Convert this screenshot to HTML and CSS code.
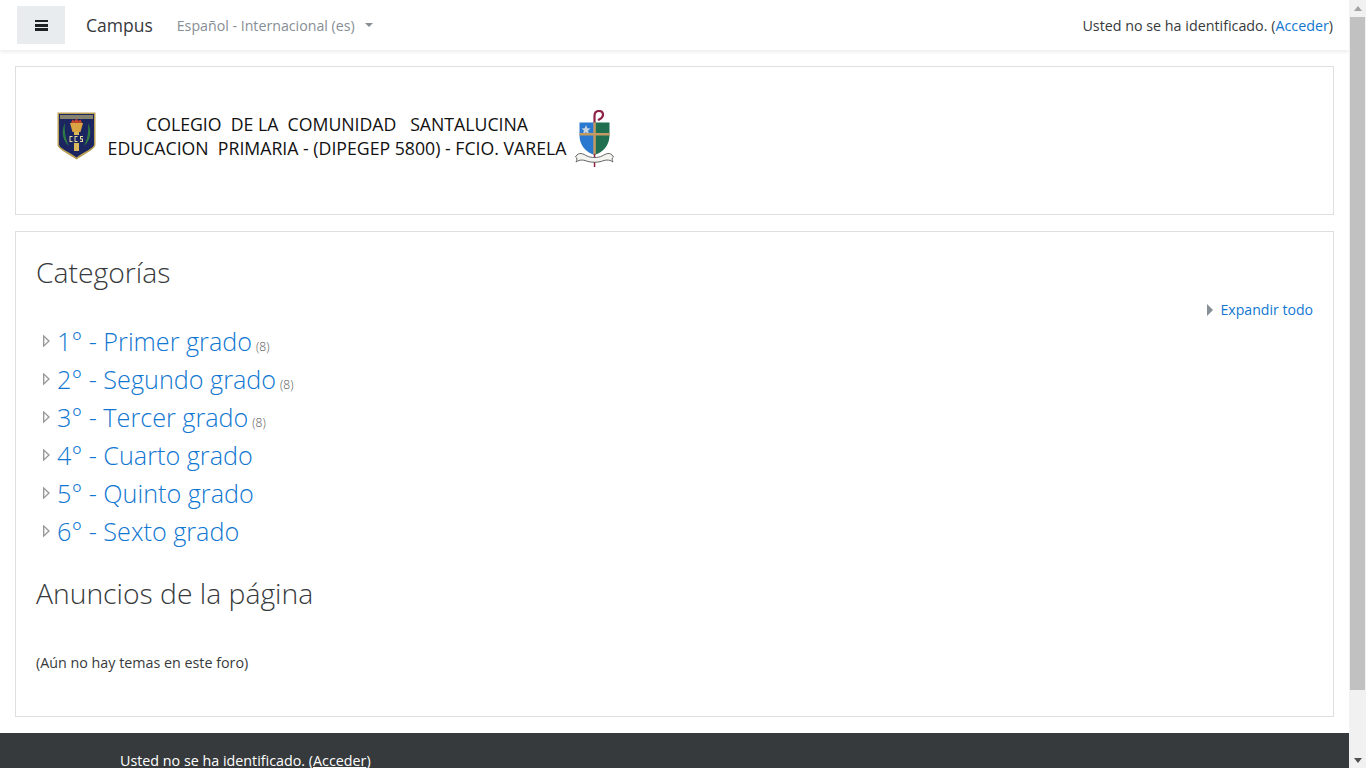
FILE: index.html
```html
<!DOCTYPE html>
<html lang="es">
<head>
    <meta charset="UTF-8">
    <meta name="viewport" content="width=device-width, initial-scale=1.0">
    <title>Campus</title>
    <link rel="stylesheet" href="styles.css">
</head>
<body>
    <div class="window">
        <div class="page">
            <nav class="navbar">
                <button class="menu-btn" aria-label="Menu">
                    <span class="bars"></span>
                </button>
                <a class="brand" href="#">Campus</a>
                <a class="lang" href="#">Español - Internacional ‎(es)‎<span class="caret"></span></a>
                <div class="login-info">Usted no se ha identificado. (<a href="#">Acceder</a>)</div>
            </nav>

            <header class="card header-card">
                <div class="logo">
                    <svg class="crest-left" width="39" height="48" viewBox="0 0 39 48">
                        <path d="M0.5 0.5H38.5V33C38.5 37 26 43 19.5 47.5C13 43 0.5 37 0.5 33Z" fill="#b9a054"/>
                        <path d="M2 2H37V32.500C37 36 25 41 19.5 45.500C14 41 2 36 2 32.500Z" fill="#1b2560"/>
                        <rect x="3" y="3" width="33" height="4" fill="#85836f"/>
                        <path d="M13 11H26L23.500 20H15.500Z" fill="#d9a441"/>
                        <path d="M14 11L15.500 7.500L17.500 9L19.500 6.500L21.500 9L23.500 7.500L25 11Z" fill="#c4452d"/>
                        <rect x="17" y="20" width="5" height="19" fill="#d9b75a"/>
                        <path d="M8 11C3.500 20 6 29 12 34C9 28 7 20 8 11Z" fill="#2f7a44"/>
                        <path d="M31 11C35.500 20 33 29 27 34C30 28 32 20 31 11Z" fill="#2f7a44"/>
                        <rect x="11" y="23" width="17" height="8" fill="#1b2560"/>
                        <path d="M12.500 24H15.500V25H13.500V29H15.500V30H12.500ZM17.500 24H20.500V25H18.500V29H20.500V30H17.500ZM23 24H26V25H24V26.500H26V30H23V29H25V27.500H23Z" fill="#e6d9a0"/>
                    </svg>
                    <div class="logo-text">
                        <div class="logo-line">COLEGIO  DE LA  COMUNIDAD   SANTALUCINA</div>
                        <div class="logo-line">EDUCACION  PRIMARIA - (DIPEGEP 5800) - FCIO. VARELA</div>
                    </div>
                    <svg class="crest-right" width="39" height="57" viewBox="0 0 39 57">
                        <path d="M19.500 13V6C19.500 2.500 21 1 24 1C27 1 28 3 28 5C28 8 25 9 23 10" fill="none" stroke="#8e2345" stroke-width="2.200"/>
                        <path d="M4.500 12.500H19.500V45C11 42 4.500 36 4.500 25Z" fill="#2a78d0"/>
                        <path d="M19.500 12.500H34.500V25C34.500 36 28 42 19.500 45Z" fill="#1f6f50"/>
                        <path d="M11 15L12.300 18.200L15.500 18.500L13.100 20.600L13.900 24L11 22.200L8.100 24L8.900 20.600L6.500 18.500L9.700 18.200Z" fill="#c9d3de"/>
                        <rect x="4.500" y="23" width="30" height="2.500" fill="#c49a63"/>
                        <rect x="18.300" y="12.500" width="2.500" height="32" fill="#c49a63"/>
                        <rect x="18.800" y="44" width="1.500" height="13" fill="#8e2345"/>
                        <path d="M0.500 47C4 41 8 44 12 46C16 48 23 48 27 46C31 44 35 41 38.500 47C36.500 48 37 50 38 52C34 49 30 50 26 51.500C22 52.500 17 52.500 13 51.500C9 50 5 49 1 52C2 50 2.500 48 0.500 47Z" fill="#f4f4f0" stroke="#555" stroke-width="0.900"/>
                    </svg>
                </div>
            </header>

            <main class="card main-card">
                <h2 class="section-title">Categorías</h2>
                <div class="expand-row">
                    <a class="expand-all" href="#"><span class="arrow-solid"></span>Expandir todo</a>
                </div>
                <ul class="categories">
                    <li><span class="arrow-open"></span><a href="#">1° - Primer grado</a><span class="count">(8)</span></li>
                    <li><span class="arrow-open"></span><a href="#">2° - Segundo grado</a><span class="count">(8)</span></li>
                    <li><span class="arrow-open"></span><a href="#">3° - Tercer grado</a><span class="count">(8)</span></li>
                    <li><span class="arrow-open"></span><a href="#">4° - Cuarto grado</a></li>
                    <li><span class="arrow-open"></span><a href="#">5° - Quinto grado</a></li>
                    <li><span class="arrow-open"></span><a href="#">6° - Sexto grado</a></li>
                </ul>
                <h2 class="section-title news-title">Anuncios de la página</h2>
                <p class="no-topics">(Aún no hay temas en este foro)</p>
            </main>

            <footer class="footer">
                <div class="footer-login">Usted no se ha identificado. (<a href="#">Acceder</a>)</div>
            </footer>
        </div>

        <div class="scrollbar">
            <span class="sb-up"></span>
            <span class="sb-thumb"></span>
            <span class="sb-down"></span>
        </div>
    </div>
</body>
</html>
```

FILE: styles.css
```css
html, body {
    margin: 0;
    height: 100%;
    overflow: hidden;
}
body {
    background-color: #fff;
    color: #373a3c;
    font-family: "Open Sans", "Noto Sans", sans-serif;
    font-size: 14.3px;
}
a {
    color: #1177d1;
    text-decoration: none;
}
.window {
    display: flex;
    height: 768px;
    overflow: hidden;
}
.page {
    flex: 1;
    min-width: 0;
}

/* top bar */
.navbar {
    display: flex;
    align-items: center;
    height: 50px;
    padding: 0 17px;
    margin-bottom: 16px;
    background-color: #fff;
    box-shadow: 0 2px 4px rgba(0, 0, 0, 0.08);
}
.menu-btn {
    display: flex;
    align-items: center;
    justify-content: center;
    width: 48px;
    height: 38px;
    padding: 0;
    border: 0;
    background-color: #e9ecef;
}
.bars {
    display: block;
    width: 13px;
    height: 11px;
    background: linear-gradient(#1d2124 0 2.5px, transparent 2.5px 4.25px, #1d2124 4.25px 6.75px, transparent 6.75px 8.5px, #1d2124 8.5px);
}
.brand {
    margin-left: 21px;
    color: #373a3c;
    font-size: 17.5px;
}
.lang {
    display: flex;
    align-items: center;
    margin-left: 24px;
    color: #868e96;
    font-size: 14.2px;
}
.caret {
    width: 0;
    height: 0;
    margin-left: 10px;
    border-top: 4px solid #868e96;
    border-left: 4px solid transparent;
    border-right: 4px solid transparent;
}
.login-info {
    margin-left: auto;
    margin-right: -1px;
}

/* cards */
.card {
    margin: 0 15px 16px;
    border: 1px solid #dfdfdf;
    background-color: #fff;
}
.header-card {
    height: 147px;
}
.logo {
    display: flex;
    align-items: flex-start;
    padding: 43px 0 0 41px;
}
.crest-left {
    flex: none;
    margin-top: 2px;
}
.logo-text {
    width: 460px;
    margin: 2px 8px 0 11px;
    color: #111;
    font-size: 17.7px;
    line-height: 24px;
    text-align: center;
}
.logo-line {
    white-space: pre;
}
.crest-right {
    flex: none;
}
.main-card {
    height: 484px;
    padding: 0 20px;
}
.section-title {
    margin: 21px 0 0;
    color: #373a3c;
    font-size: 28.3px;
    font-weight: 300;
    line-height: 38px;
}
.expand-row {
    display: flex;
    justify-content: flex-end;
    height: 20px;
    margin-top: 9px;
    line-height: 20px;
    font-size: 14.1px;
}
.arrow-solid {
    display: inline-block;
    margin-right: 7px;
    border-left: 6px solid #868e96;
    border-top: 6px solid transparent;
    border-bottom: 6px solid transparent;
    vertical-align: -1px;
}

/* category tree */
.categories {
    margin: 2px 0 0;
    padding: 0;
    list-style: none;
}
.categories li {
    display: flex;
    align-items: baseline;
    height: 38px;
    line-height: 38px;
    font-size: 25.2px;
    font-weight: 300;
}
.arrow-open {
    position: relative;
    flex: none;
    align-self: center;
    width: 21px;
    height: 13px;
}
.arrow-open::before {
    content: "";
    position: absolute;
    left: 7px;
    top: 0;
    width: 7px;
    height: 13px;
    background-color: #999;
    clip-path: polygon(0 0, 100% 50%, 0 100%, 0 0, 1.4px 3px, 1.4px 10px, 5px 6.500px, 1.400px 3px);
}
.count {
    margin-left: 4px;
    color: #555;
    font-size: 12px;
}
.news-title {
    margin-top: 24px;
}
.no-topics {
    margin: 41px 0 0;
    line-height: 20px;
}

/* footer */
.footer {
    height: 60px;
    padding: 17px 120px 0;
    background-color: #373a3c;
    color: #fff;
    line-height: 21px;
}
.footer a {
    color: #fff;
    text-decoration: underline;
}

/* fake browser scrollbar */
.scrollbar {
    display: flex;
    flex-direction: column;
    align-items: center;
    flex: none;
    width: 17px;
    background-color: #f1f1f1;
}
.sb-up, .sb-down {
    flex: none;
    width: 0;
    height: 0;
    border-left: 4px solid transparent;
    border-right: 4px solid transparent;
}
.sb-up {
    margin: 6px 0 6px;
    border-bottom: 5px solid #a3a3a3;
}
.sb-down {
    margin: auto 0 5px;
    border-top: 5px solid #505050;
}
.sb-thumb {
    flex: none;
    width: 15px;
    height: 673px;
    background-color: #c1c1c1;
}
```
